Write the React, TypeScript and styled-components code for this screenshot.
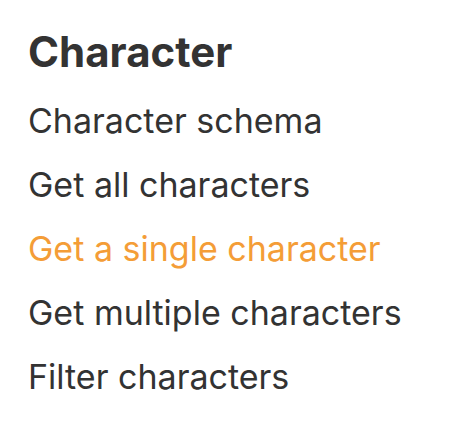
import React from "react";
import styled, { createGlobalStyle } from "styled-components";

const Global = createGlobalStyle`
  html, body { margin: 0; padding: 0; background: #fff; }
  body { font-family: Inter, "Noto Sans", sans-serif; }
`;

const Nav = styled.nav`
  padding: 26px 28px;
  display: flex;
  flex-direction: column;
  gap: 12px;
`;

const Heading = styled.h2`
  margin: 0;
  font-size: 42px;
  line-height: 51px;
  font-weight: 700;
  color: #333333;
`;

const List = styled.ul`
  list-style: none;
  margin: 0;
  padding: 0;
  display: flex;
  flex-direction: column;
`;

const Item = styled.li<{ $active?: boolean }>`
  font-size: 34px;
  line-height: 64px;
  color: ${(p) => (p.$active ? "#f49d37" : "#333333")};
`;

const items = [
  "Character schema",
  "Get all characters",
  "Get a single character",
  "Get multiple characters",
  "Filter characters",
];

export default function App() {
  return (
    <>
      <Global />
      <Nav>
        <Heading>Character</Heading>
        <List>
          {items.map((t, i) => (
            <Item key={t} $active={i === 2}>
              {t}
            </Item>
          ))}
        </List>
      </Nav>
    </>
  );
}
